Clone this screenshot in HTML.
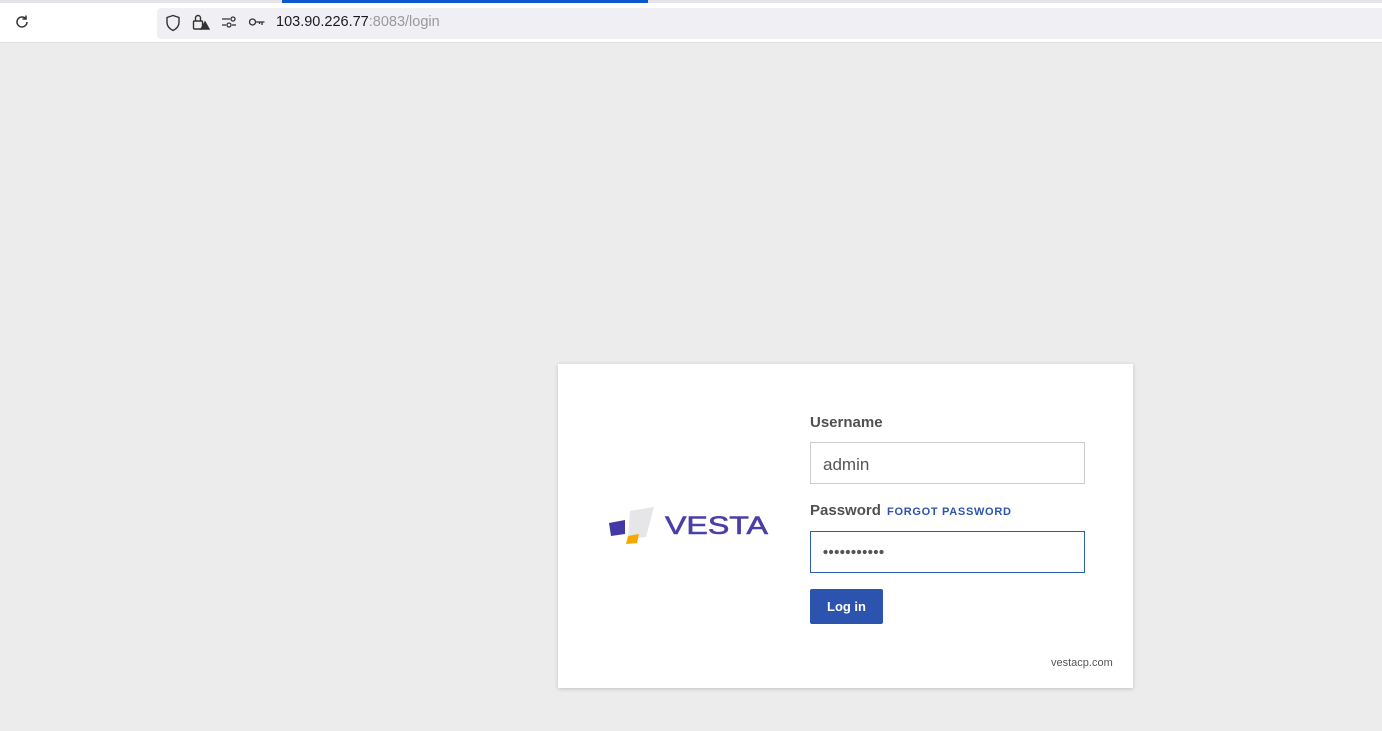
<!DOCTYPE html>
<html><head><meta charset="utf-8"><style>
*{margin:0;padding:0;box-sizing:border-box}
body{width:1382px;height:731px;background:#ececec;font-family:"Liberation Sans",sans-serif;position:relative;overflow:hidden}
.abs{position:absolute}
</style></head><body>
<div class="abs" style="left:0;top:0;width:1382px;height:3px;background:#e4e4e8"></div>
<div class="abs" style="left:282px;top:0;width:366px;height:3px;background:#0b57d0"></div>
<div class="abs" style="left:0;top:3px;width:1382px;height:40px;background:#fff;border-bottom:1px solid #e0e0e0"></div>
<svg class="abs" style="left:14px;top:14px" width="16" height="16" viewBox="0 0 16 16" fill="none" stroke="#333" stroke-width="1.5"><path d="M13 8a5 5 0 1 1-1.5-3.6"/><path d="M12 1.5v3.5h-3.5" /></svg>
<div class="abs" style="left:157px;top:8px;width:1225px;height:31px;background:#f0f0f4;border-radius:4px 0 0 4px"></div>
<svg class="abs" style="left:165px;top:14px" width="16" height="18" viewBox="0 0 16 18" fill="none" stroke="#333" stroke-width="1.4"><path d="M8 1.5L2 3.5v5c0 4 3 6.5 6 8 3-1.5 6-4 6-8v-5z"/></svg>
<svg class="abs" style="left:192px;top:13px" width="18" height="18" viewBox="0 0 18 18" fill="none" stroke="#333" stroke-width="1.4"><rect x="1.5" y="8" width="9" height="8" rx="1"/><path d="M3.5 8V5a2.5 2.5 0 0 1 5 0v3"/><path d="M13 9l4 7h-8z" fill="#333"/></svg>
<svg class="abs" style="left:221px;top:15px" width="16" height="14" viewBox="0 0 16 14" fill="none" stroke="#333" stroke-width="1.3"><path d="M1 4h8M1 10h4"/><circle cx="12" cy="4" r="2"/><circle cx="8" cy="10" r="2"/><path d="M11 10h4"/></svg>
<svg class="abs" style="left:248px;top:16px" width="18" height="12" viewBox="0 0 18 12" fill="none" stroke="#333" stroke-width="1.3"><circle cx="4.5" cy="6" r="3"/><path d="M7.5 6h9M14 6v3M11.5 6v2"/></svg>
<div class="abs" style="left:276px;top:14px;font-size:14.5px;color:#1c1b22">103.90.226.77<span style="color:#9a9a9e">:8083/login</span></div>

<div class="abs" style="left:558px;top:364px;width:575px;height:324px;background:#fff;box-shadow:0 1px 4px rgba(0,0,0,.18)"></div>
<svg class="abs" style="left:605px;top:503px" width="170" height="44" viewBox="605 503 170 44">
<polygon points="630,511 654,507 646,537 628,539" fill="#e6e6e8"/>
<polygon points="609,523 625,520 625,534 611,536" fill="#4239a6"/>
<polygon points="628,536 639,534 637,543 626,544" fill="#f6a800"/>
<text x="665" y="534" font-family="Liberation Sans, sans-serif" font-size="25" fill="#4a3ea8" stroke="#4a3ea8" stroke-width="0.6" textLength="103" lengthAdjust="spacingAndGlyphs">VESTA</text>
</svg>

<div class="abs" style="left:810px;top:414px;font-size:15px;font-weight:bold;color:#505050">Username</div>
<div class="abs" style="left:810px;top:442px;width:275px;height:42px;border:1px solid #ccc;padding:12px 12px;font-size:17px;color:#555">admin</div>
<div class="abs" style="left:810px;top:502px;font-size:15px;font-weight:bold;color:#505050">Password <span style="font-size:11px;color:#2c54ae;letter-spacing:.7px;margin-left:2px">FORGOT PASSWORD</span></div>
<div class="abs" style="left:810px;top:531px;width:275px;height:42px;border:1px solid #2c5fb0"></div>
<svg class="abs" style="left:820px;top:547px" width="70" height="10" viewBox="0 0 70 10" fill="#555">
<circle cx="5.5" cy="5" r="2.1"/><circle cx="11.1" cy="5" r="2.1"/><circle cx="16.7" cy="5" r="2.1"/><circle cx="22.3" cy="5" r="2.1"/><circle cx="27.9" cy="5" r="2.1"/><circle cx="33.5" cy="5" r="2.1"/><circle cx="39.1" cy="5" r="2.1"/><circle cx="44.7" cy="5" r="2.1"/><circle cx="50.3" cy="5" r="2.1"/><circle cx="55.9" cy="5" r="2.1"/><circle cx="61.5" cy="5" r="2.1"/>
</svg>
<div class="abs" style="left:810px;top:589px;width:73px;height:35px;background:#2c54ae;border-radius:2px;color:#fff;font-size:13px;font-weight:bold;text-align:center;line-height:35px">Log in</div>
<div class="abs" style="left:1051px;top:657px;font-size:11px;color:#555">vestacp.com</div>
</body></html>
